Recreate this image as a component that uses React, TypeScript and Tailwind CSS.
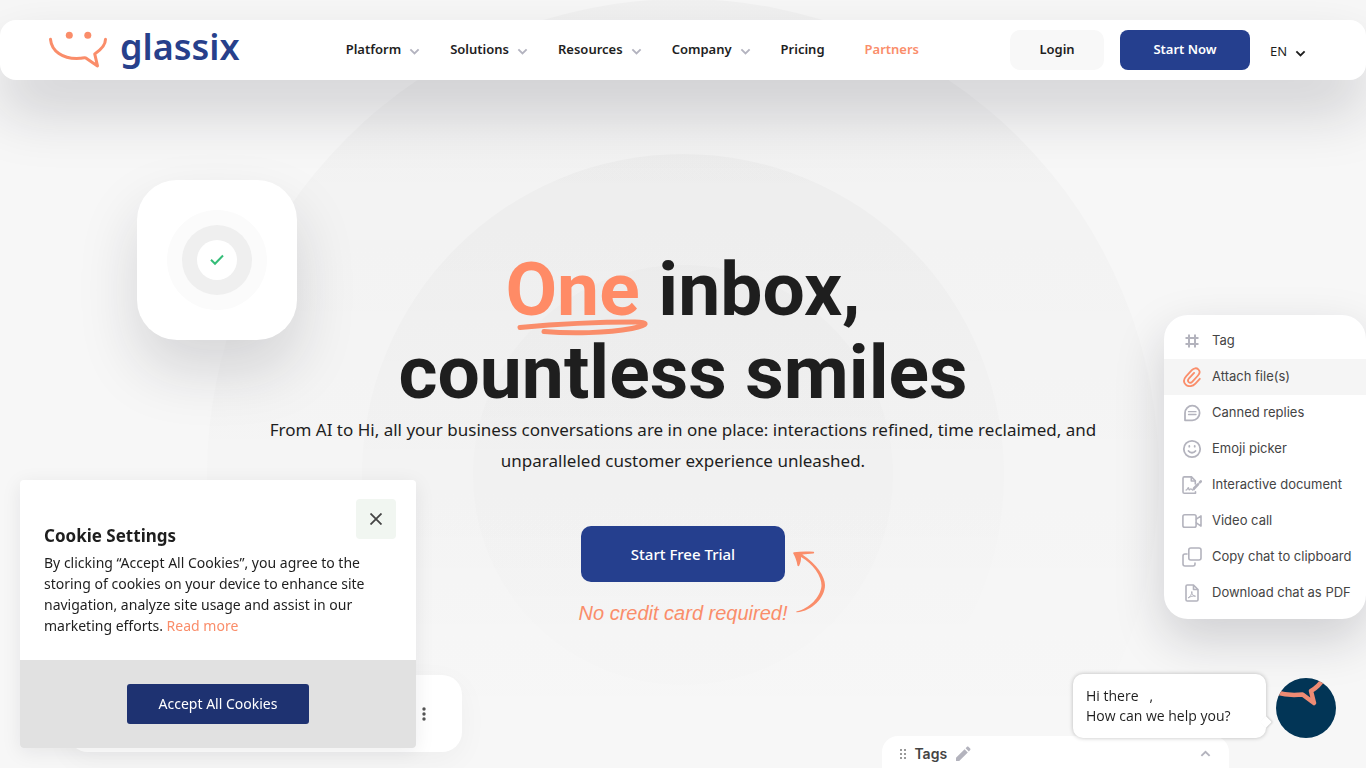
import type { ReactNode } from 'react'

const PAGE_FONT = `font-["Noto_Sans",sans-serif]`

interface NavItem {
  label: string
  hasMenu?: boolean
  active?: boolean
}

interface Action {
  label: string
  icon: ReactNode
  active?: boolean
}

const navItems: NavItem[] = [
  { label: 'Platform', hasMenu: true },
  { label: 'Solutions', hasMenu: true },
  { label: 'Resources', hasMenu: true },
  { label: 'Company', hasMenu: true },
  { label: 'Pricing' },
  { label: 'Partners', active: true },
]

function Chevron({ className }: { className?: string }) {
  return <svg viewBox="0 0 12 8" className={className} fill="none" stroke="currentColor" strokeWidth="2">
    <path d="M1.5 1.5 6 6l4.5-4.5" />
  </svg>
}

function Icon({ children, width = 1.8 }: { children: ReactNode, width?: number }) {
  return <svg viewBox="0 0 20 20" className="size-5 flex-none" fill="none" stroke="currentColor" strokeWidth={width} strokeLinecap="round" strokeLinejoin="round">
    {children}
  </svg>
}

const actions: Action[] = [
  {
    label: 'Tag',
    icon: <Icon width={2}><path d="M7 3.5v13M13 3.5v13M3.5 7h13M3.5 13h13" strokeLinecap="butt" /></Icon>,
  },
  {
    label: 'Attach file(s)',
    active: true,
    icon: <Icon width={1.8}>
      <path d="m17.8 11.8-4.4 4.8c-3 3.200-7.300 3.300-9.700 1-2.300-2.300-2.100-5.600.6-8.500l5.500-6c2-2.200 4.800-2.400 6.500-.8 1.700 1.600 1.600 4.100-.3 6.200l-5.600 6.100c-1.200 1.300-2.700 1.400-3.700.5-.9-.9-.9-2.400.3-3.700l5.100-5.500" />
    </Icon>,
  },
  {
    label: 'Canned replies',
    icon: <Icon width={1.800}>
      <path d="M3 17.300V10a7.300 7.300 0 1 1 7.300 7.300Z" />
      <path d="M6.500 8.700h7.500M6.500 11.500h7.500" strokeWidth="1.300" />
    </Icon>,
  },
  {
    label: 'Emoji picker',
    icon: <Icon>
      <circle cx="10" cy="10" r="8.200" />
      <path d="M6.500 12c1.800 2.300 5.200 2.300 7 0M7.300 7v.7M12.700 7v.7" />
    </Icon>,
  },
  {
    label: 'Interactive document',
    icon: <Icon width={1.600}>
      <path d="M13.500 16.800v1.400H2.300c-.7 0-1.300-.6-1.300-1.300V3.200c0-.7.6-1.300 1.300-1.300h7.200l3.800 3.800V9" />
      <path d="M9.300 2v4h4" />
      <path d="M4 15.200c1.500-.3 1.700-2.700 2.400-2.700s0 2.500.9 2.400 1-1.200 1.600-1.100.5.900 1.400.8" strokeWidth="1.200" />
      <path d="m12 13.500 4-4.200M17.900 7.300l.9-.9" strokeWidth="2.600" />
      <path d="m10.500 15.300 1-2 1.200 1.100Z" fill="currentColor" strokeWidth=".6" />
    </Icon>,
  },
  {
    label: 'Video call',
    icon: <Icon width={1.600}>
      <rect x=".9" y="3.800" width="13.200" height="12.400" rx="1.800" />
      <path d="m14.300 8.200 4.700-3.300v10.200l-4.700-3.300" />
    </Icon>,
  },
  {
    label: 'Copy chat to clipboard',
    icon: <Icon width={1.600}>
      <rect x="6.800" y="1" width="12.200" height="12" rx="2" />
      <path d="M5 7H3a2 2 0 0 0-2 2v8a2 2 0 0 0 2 2h8a2 2 0 0 0 2-2v-1" />
    </Icon>,
  },
  {
    label: 'Download chat as PDF',
    icon: <Icon width={1.600}>
      <path d="M11.500 2H5.300C4.500 2 4 2.600 4 3.300v13.400c0 .7.600 1.300 1.300 1.300h9.400c.7 0 1.300-.6 1.300-1.300V6.500L11.500 2v4.500H16" />
      <path d="M6.500 14.700c1.700-.8 3.300-3.400 3.300-6.200 0 2.800 1.300 4.500 3.700 4.700-2.400-.4-4.700 0-7 1.500Z" strokeWidth="1" />
    </Icon>,
  },
]

function Logo() {
  return <a href="#" className="flex items-center gap-3">
    <svg viewBox="0 0 60 40" className="h-10 w-[60px] flex-none" fill="none" stroke="#fa8d6a" strokeWidth="3" strokeLinecap="round" strokeLinejoin="round">
      <circle cx="21.300" cy="5.300" r="3.500" fill="#fa8d6a" stroke="none" />
      <circle cx="39.800" cy="5.300" r="3.500" fill="#fa8d6a" stroke="none" />
      <path d="M2.500 9.300C3.500 20.500 14 29.500 32 28.300c2 0 3.800-.8 5.800-.4l11.700 8-2.800-12C52 20.500 57.500 15.500 57.500 9.300" />
    </svg>
    <span className="-mt-1.5 text-[36px] leading-10 font-semibold text-[#27408b]">glassix</span>
  </a>
}

function Header() {
  return <header className="relative z-10 mt-5 flex h-[60px] items-center rounded-2xl bg-white pr-[60px] pl-12 shadow-[0_30px_60px_rgba(24,24,37,0.18)]">
    <Logo />
    <nav className="ml-[106px]">
      <ul className="flex items-center text-[13px] font-semibold">
        {navItems.map(item => <li key={item.label} className={item.hasMenu ? 'mr-[30px]' : 'mr-10'}>
          <a href="#" className={`flex items-center gap-2 ${item.active ? 'text-[#fa8d6a]' : 'text-[#1e1e1e]'}`}>
            {item.label}
            {item.hasMenu && <Chevron className="mt-1 w-[11px] text-[#b3b3bf]" />}
          </a>
        </li>)}
      </ul>
    </nav>
    <div className="ml-auto flex items-center">
      <a href="#" className="flex h-10 w-[94px] items-center justify-center rounded-[10px] bg-[#f8f8f8] text-[13px] font-semibold">Login</a>
      <a href="#" className="ml-4 flex h-10 w-[130px] items-center justify-center rounded-lg bg-[#253f8e] text-[13px] font-semibold text-white">Start Now</a>
      <label className="relative mt-1 ml-5 flex items-center">
        <select aria-label="Language" className="w-9 appearance-none bg-transparent text-[13px]" defaultValue="EN">
          <option>EN</option>
        </select>
        <Chevron className="pointer-events-none absolute right-0 mt-1 w-[11px]" />
      </label>
    </div>
  </header>
}

function Rings() {
  return <svg viewBox="0 0 960 960" className="absolute -top-[5px] left-1/2 size-[960px] -translate-x-1/2">
    <defs>
      <linearGradient id="ring" x1="0" y1="0" x2="0" y2="1">
        <stop offset="0" stopColor="#000" stopOpacity="0.024" />
        <stop offset="0.800" stopColor="#000" stopOpacity="0" />
      </linearGradient>
      <linearGradient id="ring-inner" x1="0" y1="0" x2="0" y2="1">
        <stop offset="0" stopColor="#000" stopOpacity="0.014" />
        <stop offset="1" stopColor="#000" stopOpacity="0.004" />
      </linearGradient>
    </defs>
    <circle cx="480" cy="480" r="476" fill="url(#ring)" />
    <circle cx="480" cy="480" r="321" fill="url(#ring)" />
    <circle cx="480" cy="480" r="210" fill="url(#ring-inner)" />
  </svg>
}

function StatusCard() {
  return <div className="absolute top-[180px] left-[10%] flex size-40 items-center justify-center rounded-[40px] bg-white shadow-[0_30px_60px_rgba(24,24,37,0.15)]">
    <div className="flex size-[100px] items-center justify-center rounded-full bg-[#fbfbfb]">
      <div className="flex size-[70px] items-center justify-center rounded-full bg-[#efefef]">
        <div className="flex size-10 items-center justify-center rounded-full bg-white">
          <svg viewBox="0 0 14 12" className="w-3.5" fill="none" stroke="#35bd78" strokeWidth="2">
            <path d="m1 5.800 4 4L13 1.500" />
          </svg>
        </div>
      </div>
    </div>
  </div>
}

function ActionMenu() {
  return <ul className={`absolute top-[315px] right-0 w-[202px] rounded-3xl bg-white py-2 font-["Inter",sans-serif] text-[13px] text-[#444] shadow-[0_20px_50px_rgba(24,24,37,0.18)]`}>
    {actions.map(action => <li key={action.label}>
      <button type="button" className={`flex h-9 w-full items-center gap-2.5 pl-[18px] whitespace-nowrap ${action.active ? 'bg-[#f5f5f5]' : ''}`}>
        <span className={action.active ? 'text-[#fa8d6a]' : 'text-[#b3b3bd]'}>{action.icon}</span>
        {action.label}
      </button>
    </li>)}
  </ul>
}

function Hero() {
  return <section className="relative flex flex-col items-center px-4 pt-[168px] text-center">
    <h1 className={`font-["Roboto",sans-serif] text-[75px] leading-[83px] font-bold`}>
      <span className="relative inline-block text-[#ff8b66]">
        One
        <svg viewBox="0 0 132 18" className="absolute top-[71px] left-3 w-[132px]" fill="none" stroke="#fa8d6a" strokeWidth="5" strokeLinecap="round" strokeLinejoin="round">
          <path d="M3 8.500C45 4.500 85 3 118 3c14 0 14 3.500-3 6.500C90 14 55 15 27 12.500" />
        </svg>
      </span>{' '}
      inbox,
      <br />
      countless smiles
    </h1>
    <p className="max-w-[860px] text-[17px] leading-[31px]">
      From AI to Hi, all your business conversations are in one place: interactions refined, time reclaimed, and unparalleled customer experience unleashed.
    </p>
    <div className="relative mt-[50px] flex w-[204px] flex-col items-center">
      <a href="#" className="flex h-14 w-full items-center justify-center rounded-[10px] bg-[#253f8e] text-[15px] font-medium text-white">Start Free Trial</a>
      <p className={`mt-4 font-["Liberation_Sans_Narrow","Liberation_Sans",sans-serif] text-[20px] leading-[30px] whitespace-nowrap text-[#fa8d6a] italic`}>No credit card required!</p>
      <svg viewBox="0 0 34 64" className="absolute top-6 left-full ml-2 w-[34px]" fill="#fa8d6a">
        <path d="M1 2.200c6-.8 13-1 19.500-.4 1 .2.800 1.600-.2 1.700-3.800.5-7.300.5-11 1C24 14 32 27 32 35c0 13-13 26-28 27.300-1 .1-1-.8 0-1 12-2.500 23.500-14 24.500-25.500C28.800 26 20 14 8 7c.2 3-.3 5.500-1.700 8.500-.5 1-1.700.8-1.900-.2C3.800 11.300 2.500 7.500.4 3.800c-.4-.8-.2-1.500.6-1.600Z" />
      </svg>
    </div>
  </section>
}

function TagsCard() {
  return <div className={`absolute right-[10%] -bottom-3 flex h-11 w-[347px] items-start rounded-t-2xl bg-white pt-2 pr-[18px] pl-[18px] font-["Inter",sans-serif] text-sm font-semibold text-[#444]`}>
    <svg viewBox="0 0 6 12" className="mt-1 h-3 w-1.5" fill="#999">
      <path d="M0 1h2v2H0zM4 1h2v2H4zM0 5h2v2H0zM4 5h2v2H4zM0 9h2v2H0zM4 9h2v2H4z" />
    </svg>
    <span className="ml-2">Tags</span>
    <svg viewBox="0 0 16 16" className="mt-0.5 ml-2 size-4 text-[#b3b3bd]" fill="currentColor">
      <path d="M1 15v-3.200l8.600-8.600 3.200 3.200L4.200 15ZM10.600 2.200 12 .8c.4-.4 1-.4 1.400 0l1.800 1.800c.4.4.4 1 0 1.400l-1.400 1.400Z" />
    </svg>
    <Chevron className="mt-1.5 ml-auto w-[11px] rotate-180 text-[#b3b3bd]" />
  </div>
}

function ContactCard() {
  return <div className="absolute bottom-4 left-[5%] flex h-[77px] w-[394px] items-center justify-end rounded-[20px] bg-white pr-9 shadow-[0_8px_30px_rgba(24,24,37,0.04)]">
    <svg viewBox="0 0 4 14" className="h-3.5 w-1" fill="#555">
      <circle cx="2" cy="2" r="1.700" />
      <circle cx="2" cy="7" r="1.700" />
      <circle cx="2" cy="12" r="1.700" />
    </svg>
  </div>
}

function CookieBanner() {
  return <div role="dialog" aria-labelledby="cookie-title" className="fixed bottom-5 left-5 z-20 w-[396px] max-w-full overflow-hidden rounded bg-white shadow-[0_4px_20px_rgba(24,24,37,0.08)]">
    <button type="button" aria-label="Close" className="absolute top-[19px] right-5 flex size-10 items-center justify-center rounded bg-[#f1f6f1]">
      <svg viewBox="0 0 12 12" className="size-3" fill="none" stroke="#444" strokeWidth="1.800">
        <path d="m.5.500 11 11M11.500.500l-11 11" />
      </svg>
    </button>
    <div className="px-6 pt-11 pb-6">
      <h2 id="cookie-title" className="text-[17px] leading-6 font-bold">Cookie Settings</h2>
      <p className="mt-1 text-sm leading-[21px]">
        By clicking “Accept All Cookies”, you agree to the storing of cookies on your device to enhance site navigation, analyze site usage and assist in our marketing efforts. <a href="#" className="inline-block text-[#fa8d6a]">Read more</a>
      </p>
    </div>
    <div className="flex h-[88px] items-center justify-center bg-[#e1e1e1]">
      <button type="button" className="h-10 w-[182px] rounded-[3px] bg-[#1e3271] text-sm text-white">Accept All Cookies</button>
    </div>
  </div>
}

function ChatWidget() {
  return <div className="fixed right-[30px] bottom-[30px] z-20 flex items-end gap-2.5">
    <div className={`relative h-16 w-[193px] rounded-[10px] bg-white px-[13px] pt-3 font-["Open_Sans",sans-serif] text-sm leading-5 shadow-[0_0_4px_rgba(0,0,0,0.25)]`}>
      <span className="absolute right-[-4px] bottom-3 size-2 rotate-45 bg-white shadow-[1px_-1px_2px_rgba(0,0,0,0.15)]" />
      <p className="whitespace-pre">{'Hi there   ,'}</p>
      <p>How can we help you?</p>
    </div>
    <button type="button" aria-label="Open chat" className="size-[60px] overflow-hidden rounded-full bg-[#023556]">
      <svg viewBox="0 0 60 60" fill="none" stroke="#ee8b74" strokeWidth="4.500" strokeLinejoin="round">
        <path d="M0 14.500c8 2.300 17 3 26.500 2L38 25l-3-12C40 10 44.500 6 48 0" />
      </svg>
    </button>
  </div>
}

export default function App() {
  return <div className={`relative min-h-screen overflow-hidden bg-[#f7f7f7] text-[#1e1e1e] ${PAGE_FONT}`}>
    <Rings />
    <div className="flow-root">
      <Header />
      <Hero />
    </div>
    <StatusCard />
    <ActionMenu />
    <ContactCard />
    <TagsCard />
    <CookieBanner />
    <ChatWidget />
  </div>
}
